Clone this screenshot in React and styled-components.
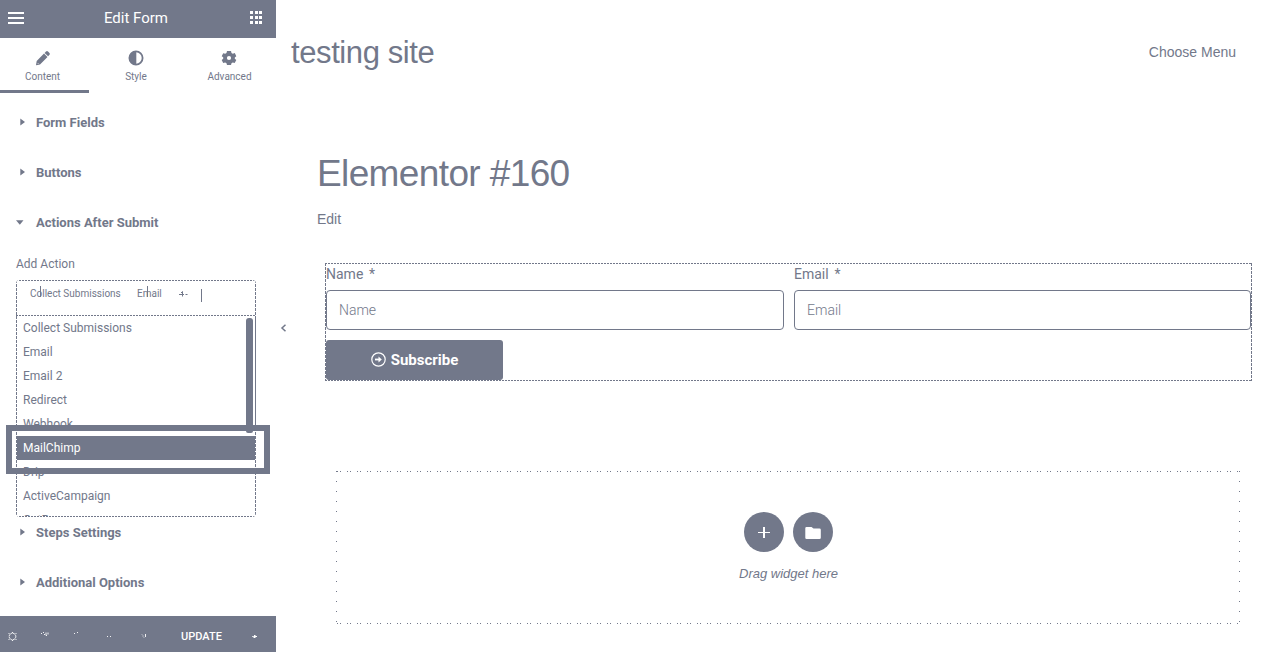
import React from 'react';
import styled, { createGlobalStyle, css } from 'styled-components';

const slate = '#72788a';
const roboto = "Roboto, 'Liberation Sans', sans-serif";
const arial = "'Liberation Sans', Arial, sans-serif";

const GlobalStyle = createGlobalStyle`
  * { box-sizing: border-box; }
  html, body { margin: 0; padding: 0; background: #fff; }
  body { overflow: hidden; color: ${slate}; font-family: ${roboto}; }
  button { border: 0; padding: 0; margin: 0; background: none; color: inherit; font: inherit; }
`;

const hDash = `repeating-linear-gradient(90deg, ${slate} 0 2px, transparent 2px 3px)`;
const vDash = `repeating-linear-gradient(180deg, ${slate} 0 3px, transparent 3px 4px)`;

const dashedBox = css`
  background-image: ${hDash}, ${hDash}, ${vDash}, ${vDash};
  background-size: 100% 1px, 100% 1px, 1px 100%, 1px 100%;
  background-position: 0 0, 0 100%, 0 0, 100% 0;
  background-repeat: no-repeat;
`;

const Screen = styled.div`
  display: flex;
  width: 1264px;
  height: 652px;
  overflow: hidden;
`;

const Sidebar = styled.aside`
  display: flex;
  flex-direction: column;
  flex: none;
  width: 276px;
  height: 652px;
`;

const TopBar = styled.header`
  display: flex;
  align-items: center;
  justify-content: space-between;
  height: 38px;
  padding: 0 13px 3px 8px;
  background: ${slate};
  color: #fff;
`;

const PanelTitle = styled.h1`
  margin: 0 2px 0 0;
  font-size: 15px;
  font-weight: 400;
  line-height: 20px;
`;

const Tabs = styled.nav`
  display: flex;
  height: 55px;
`;

const Tab = styled.button`
  display: flex;
  flex-direction: column;
  align-items: center;
  width: ${p => p.$width}px;
  padding: 12px ${p => p.$inset || 0}px 0 0;
  border-bottom: 3px solid ${p => (p.$active ? slate : 'transparent')};
  font-size: 10px;
  line-height: 12px;
  svg { display: block; margin-bottom: 5px; }
`;

const Sections = styled.div`
  display: flex;
  flex-direction: column;
  flex: 1;
  padding-top: 4px;
`;

const SectionHead = styled.div`
  display: flex;
  align-items: center;
  gap: ${p => (p.$open ? 12 : 11)}px;
  height: 50px;
  padding-left: ${p => (p.$open ? 16 : 20)}px;
  font-size: 13px;
  font-weight: 700;
  line-height: 16px;
`;

const SectionTitle = styled.span`
  padding-top: 2px;
`;

const Field = styled.div`
  height: 260px;
  padding: 9px 20px 0 16px;
`;

const FieldLabel = styled.div`
  height: 24px;
  padding-top: 1px;
  font-size: 12px;
  line-height: 15px;
`;

const Select = styled.div`
  position: relative;
  width: 240px;
  height: 237px;
  border-radius: 4px;
  ${dashedBox}
`;

const TagLine = styled.div`
  display: flex;
  align-items: flex-start;
  height: 36px;
  padding: 7px 0 0 14px;
  font-size: 10px;
  line-height: 14px;
  background: ${hDash} 0 35px / 100% 1px no-repeat;
`;

const Tag = styled.span`
  position: relative;
  width: ${p => p.$width}px;
  white-space: nowrap;
`;

const TagMark = styled.i`
  position: absolute;
  left: ${p => p.$left}px;
  top: -1px;
  width: 1px;
  height: 11px;
  background: ${slate};
`;

const Caret = styled.span`
  width: 1px;
  height: 13px;
  margin: 2px 0 0 13px;
  background: ${slate};
`;

const Options = styled.div`
  height: 200px;
  overflow: hidden;
`;

const Option = styled.div`
  height: 24px;
  margin: 0 1px;
  padding-left: 6px;
  font-size: 12px;
  line-height: 24px;
  color: ${p => (p.$active ? '#fff' : slate)};
  background: ${p => (p.$active ? slate : 'transparent')};
`;

const Scrollbar = styled.div`
  position: absolute;
  left: 230px;
  top: 38px;
  width: 7px;
  height: 115px;
  border-radius: 3px 3px 2px 2px;
  background: ${slate};
`;

const ListEdge = styled.div`
  position: absolute;
  right: 0;
  top: 38px;
  width: 1px;
  height: 107px;
  background: ${slate};
`;

const Highlight = styled.div`
  position: absolute;
  left: -10px;
  top: 145px;
  width: 264px;
  height: 49px;
  border: 6px solid ${slate};
`;

const Footer = styled.footer`
  display: flex;
  align-items: center;
  height: 36px;
  padding-top: 4px;
  background: ${slate};
  color: #fff;
  svg { display: block; flex: none; }
`;

const UpdateButton = styled.button`
  width: 49px;
  margin: 0 4px 0 14px;
  padding-top: 1px;
  font-size: 11px;
  font-weight: 500;
  line-height: 14px;
`;

const Preview = styled.main`
  flex: 1;
  height: 652px;
`;

const SiteHeader = styled.header`
  display: flex;
  justify-content: space-between;
  height: 153px;
  padding: 34px 28px 0 15px;
  font-family: ${arial};
`;

const SiteName = styled.div`
  padding-top: 1px;
  font-size: 31px;
  line-height: 36px;
  letter-spacing: -0.4px;
`;

const MenuLink = styled.div`
  padding-top: 9px;
  font-size: 14px;
  line-height: 18px;
`;

const PageHead = styled.div`
  height: 110px;
  padding-left: 41px;
  font-family: ${arial};
`;

const PageTitle = styled.h2`
  margin: 0;
  font-size: 37px;
  font-weight: 400;
  line-height: 42px;
  letter-spacing: -0.62px;
`;

const EditLink = styled.div`
  padding-top: 15px;
  font-size: 14px;
  line-height: 18px;
`;

const FormRow = styled.div`
  display: flex;
  height: 208px;
`;

const Collapse = styled.div`
  width: 49px;
  padding: 61px 0 0 4px;
  svg { display: block; }
`;

const Form = styled.form`
  display: flex;
  flex-direction: column;
  width: 927px;
  height: 118px;
  padding: 1px;
  ${dashedBox}
`;

const Fields = styled.div`
  display: grid;
  grid-template-columns: 458px 457px;
  column-gap: 10px;
`;

const Label = styled.label`
  display: block;
  height: 26px;
  font-size: 14px;
  line-height: 20px;
  word-spacing: 2.3px;
`;

const Input = styled.div`
  height: 40px;
  padding: 0 12px;
  border: 1px solid ${slate};
  border-radius: 4px;
  font-size: 14px;
  font-weight: 300;
  line-height: 38px;
`;

const Submit = styled.button`
  display: flex;
  align-items: center;
  justify-content: center;
  gap: 5px;
  width: 177px;
  height: 40px;
  margin-top: 10px;
  padding-bottom: 1px;
  border-radius: 3px;
  background: ${slate};
  color: #fff;
  font-size: 15px;
  font-weight: 700;
  line-height: 20px;
`;

const hDots = `repeating-linear-gradient(90deg, transparent 0 1px, ${slate} 1px 2px, transparent 2px 4px, ${slate} 4px 5px, transparent 5px 10px)`;
const vDots = `repeating-linear-gradient(180deg, transparent 0 1px, ${slate} 1px 2px, transparent 2px 10px)`;

const DropZone = styled.section`
  display: flex;
  flex-direction: column;
  align-items: center;
  width: 904px;
  height: 153px;
  margin-left: 60px;
  padding-top: 41px;
  background-image: ${hDots}, ${hDots}, ${vDots}, ${vDots};
  background-size: 100% 1px, 100% 1px, 1px 100%, 1px 100%;
  background-position: 0 0, 0 100%, 0 -1px, 100% -1px;
  background-repeat: no-repeat;
`;

const RoundButtons = styled.div`
  display: flex;
  gap: 9px;
`;

const RoundButton = styled.button`
  display: flex;
  align-items: center;
  justify-content: center;
  width: 40px;
  height: 40px;
  padding-top: 1px;
  border-radius: 50%;
  background: ${slate};
  color: #fff;
`;

const DropHint = styled.div`
  padding: 14px 0 0 1px;
  font: italic 13px/16px ${arial};
`;

const MenuIcon = () => (
  <svg width="16" height="14" viewBox="0 0 16 14" fill="currentColor" shapeRendering="crispEdges">
    <path d="M0 1h16v2H0zM0 6h16v2H0zM0 11h16v2H0z" />
  </svg>
);

const GridIcon = () => (
  <svg width="13" height="13" viewBox="0 0 13 13" fill="currentColor" shapeRendering="crispEdges">
    {[0, 5, 10].map(y => [0, 5, 9].map(x => <rect key={`${x}-${y}`} x={x} y={y} width="3" height="3" />))}
  </svg>
);

const PencilIcon = () => (
  <svg width="16" height="16" viewBox="0 0 16 16" fill="currentColor">
    <path d="M11 1.600q1-1 2 0l1.500 1.500q.8.900 0 1.700l-1.400 1.500-3.500-3.400zM9 3.500l3.500 3.400-7.500 7.600-3.600.8-.4-.4.700-4zM2.700 13v.8h.8V13z" fillRule="evenodd" />
  </svg>
);

const ContrastIcon = () => (
  <svg width="16" height="16" viewBox="0 0 16 16">
    <circle cx="8" cy="8" r="6.600" fill="none" stroke="currentColor" strokeWidth="1.800" />
    <path d="M8.300 1v14A7 7 0 0 1 8.300 1z" fill="currentColor" />
  </svg>
);

const GearIcon = () => (
  <svg width="16" height="16" viewBox="0 0 16 16" fill="currentColor" style={{ marginRight: 1 }}>
    <path fillRule="evenodd" d="M6 1h4l.5 2 1.300.7 2-.6 1.500 3.200-1.500 1.200v1.300l1.500 1.200-1.600 3-2-.5-1.200.7-.5 1.900H6l-.5-1.900-1.300-.7-2 .5-1.500-3 1.500-1.300V7.300L.7 6.200l1.500-3 2 .5L5.500 3zM8 5.900a2.100 2.100 0 1 0 0 4.200 2.100 2.100 0 0 0 0-4.200z" />
  </svg>
);

const Arrow = ({ open }) =>
  open ? (
    <svg width="8" height="5" viewBox="0 0 8 5" fill="currentColor"><path d="M0 .3h7.500L3.800 4.700z" /></svg>
  ) : (
    <svg width="5" height="8" viewBox="0 0 5 8" fill="currentColor"><path d="M.3.500v7L5 4z" /></svg>
  );

const PlusMark = () => (
  <svg width="9" height="8" viewBox="0 0 9 8" stroke="currentColor" fill="none" style={{ marginTop: 3 }}>
    <path d="M0 4.500h5M6.500 4.500H8.500M3.500 1.500v5M2 3l1.500-1.500" />
  </svg>
);

const FooterIcons = () => (
  <svg width="163" height="16" viewBox="0 0 163 16" fill="none" stroke="currentColor">
    <circle cx="12.500" cy="8.500" r="3.300" strokeDasharray="2 .6" />
    <path d="M8.500 5l1 1M16.500 5l-1 1M8.500 12l1-1M16.500 12l-1-1M12.500 4v1M12.500 12v1" strokeWidth=".9" />
    <path d="M41 5.500h1M43 4.500h1M44 6.500h1M46 4.500v3M48 4.500v2M46 7.500h1" strokeWidth=".9" />
    <path d="M74 5.500h1M77 4.500h1M107 8.500h1M110 8.500h1" strokeWidth=".9" />
    <path d="M142 6.500l1 1M143 8.500l1 1M145.500 6v3" strokeWidth=".9" />
  </svg>
);

const UpArrow = () => (
  <svg width="6" height="4" viewBox="0 0 6 4" fill="currentColor" style={{ marginLeft: 22, marginTop: 1 }}>
    <path d="M2 0h1.500v1H5v1H3.500v1h-2V2H0V1.300h2z" />
  </svg>
);

const CircleArrow = () => (
  <svg width="15" height="15" viewBox="0 0 15 15" fill="none" stroke="currentColor">
    <circle cx="7.500" cy="7.500" r="6.700" strokeWidth="1.200" />
    <path d="M4 7.500h5" strokeWidth="1.800" />
    <path d="M7.500 4.500l3.300 3-3.300 3z" fill="currentColor" stroke="none" />
  </svg>
);

const PlusIcon = () => (
  <svg width="12" height="12" viewBox="0 0 12 12" fill="currentColor" shapeRendering="crispEdges">
    <path d="M5 0h2v11H5zM0 5h12v1H0z" />
  </svg>
);

const FolderIcon = () => (
  <svg width="16" height="14" viewBox="0 0 16 14" fill="currentColor">
    <path d="M1.500 1h5l2 1.500h6q1.300 0 1.300 1.300v7.900q0 1.300-1.300 1.300h-13Q.3 13 .3 11.700V2.300Q.3 1 1.500 1z" />
  </svg>
);

const ChevronLeft = () => (
  <svg width="7" height="8" viewBox="0 0 7 8" fill="none" stroke="currentColor" strokeWidth="1.500">
    <path d="M5.500.800L2 4l3.500 3.200" />
  </svg>
);

const options = [
  { name: 'Collect Submissions' },
  { name: 'Email' },
  { name: 'Email 2' },
  { name: 'Redirect' },
  { name: 'Webhook' },
  { name: 'MailChimp', active: true },
  { name: 'Drip' },
  { name: 'ActiveCampaign' },
  { name: 'GetResponse' },
];

function Section({ title, open }) {
  return (
    <SectionHead $open={open}>
      <Arrow open={open} />
      <SectionTitle>{title}</SectionTitle>
    </SectionHead>
  );
}

export default function App() {
  return (
    <Screen>
      <GlobalStyle />
      <Sidebar>
        <TopBar>
          <MenuIcon />
          <PanelTitle>Edit Form</PanelTitle>
          <GridIcon />
        </TopBar>
        <Tabs>
          <Tab $active $width={89} $inset={4}><PencilIcon />Content</Tab>
          <Tab $width={94}><ContrastIcon />Style</Tab>
          <Tab $width={93}><GearIcon />Advanced</Tab>
        </Tabs>
        <Sections>
          <Section title="Form Fields" />
          <Section title="Buttons" />
          <Section title="Actions After Submit" open />
          <Field>
            <FieldLabel>Add Action</FieldLabel>
            <Select>
              <TagLine>
                <Tag $width={107}>Collect Submissions<TagMark $left={10} /></Tag>
                <Tag $width={42}>Email<TagMark $left={10} /></Tag>
                <PlusMark />
                <Caret />
              </TagLine>
              <Options>
                {options.map(o => (
                  <Option key={o.name} $active={o.active}>{o.name}</Option>
                ))}
              </Options>
              <Scrollbar />
              <ListEdge />
              <Highlight />
            </Select>
          </Field>
          <Section title="Steps Settings" />
          <Section title="Additional Options" />
        </Sections>
        <Footer>
          <FooterIcons />
          <UpdateButton>UPDATE</UpdateButton>
          <UpArrow />
        </Footer>
      </Sidebar>
      <Preview>
        <SiteHeader>
          <SiteName>testing site</SiteName>
          <MenuLink>Choose Menu</MenuLink>
        </SiteHeader>
        <PageHead>
          <PageTitle>Elementor #160</PageTitle>
          <EditLink>Edit</EditLink>
        </PageHead>
        <FormRow>
          <Collapse><ChevronLeft /></Collapse>
          <Form>
            <Fields>
              <div>
                <Label>Name *</Label>
                <Input>Name</Input>
              </div>
              <div>
                <Label>Email *</Label>
                <Input>Email</Input>
              </div>
            </Fields>
            <Submit type="button"><CircleArrow />Subscribe</Submit>
          </Form>
        </FormRow>
        <DropZone>
          <RoundButtons>
            <RoundButton><PlusIcon /></RoundButton>
            <RoundButton><FolderIcon /></RoundButton>
          </RoundButtons>
          <DropHint>Drag widget here</DropHint>
        </DropZone>
      </Preview>
    </Screen>
  );
}
